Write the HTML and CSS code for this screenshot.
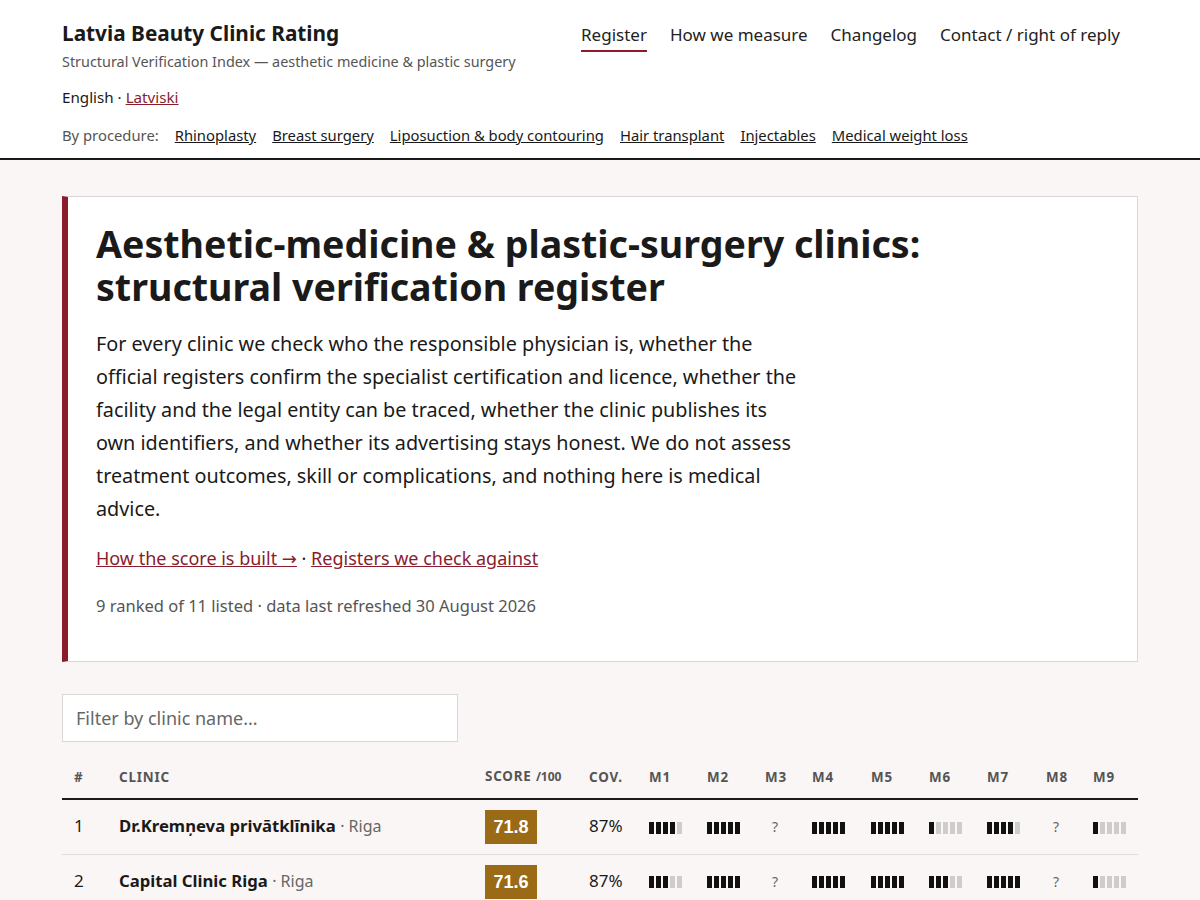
FILE: index.html
```html
<!DOCTYPE html>
<html lang="en">
  <head>
    <meta charset="utf-8">
    <title>Latvia Beauty Clinic Rating</title>
    <link rel="stylesheet" href="styles.css">
  </head>
  <body>
	<header class="site-header">
		<div class="wrap">
			<div class="top-row">
				<div class="brand">
					<div class="brand-title">Latvia Beauty Clinic Rating</div>
					<div class="brand-sub">Structural Verification Index — aesthetic medicine &amp; plastic surgery</div>
				</div>
				<nav class="main-nav">
					<a href="#" class="active">Register</a>
					<a href="#">How we measure</a>
					<a href="#">Changelog</a>
					<a href="#">Contact / right of reply</a>
				</nav>
			</div>
			<div class="lang">English · <a href="#">Latviski</a></div>
			<div class="procs">
				<span class="procs-label">By procedure:</span>
				<a href="#">Rhinoplasty</a>
				<a href="#">Breast surgery</a>
				<a href="#">Liposuction &amp; body contouring</a>
				<a href="#">Hair transplant</a>
				<a href="#">Injectables</a>
				<a href="#">Medical weight loss</a>
			</div>
		</div>
	</header>

	<main class="wrap">
		<section class="intro">
			<h1>Aesthetic-medicine &amp; plastic-surgery clinics: structural verification register</h1>
			<p class="lead">For every clinic we check who the responsible physician is, whether the official registers confirm the specialist certification and licence, whether the facility and the legal entity can be traced, whether the clinic publishes its own identifiers, and whether its advertising stays honest. We do not assess treatment outcomes, skill or complications, and nothing here is medical advice.</p>
			<p class="links"><a href="#">How the score is built <span class="arrow">→</span></a> · <a href="#">Registers we check against</a></p>
			<p class="meta">9 ranked of 11 listed · data last refreshed 30 August 2026</p>
		</section>

		<input type="text" class="filter" placeholder="Filter by clinic name...">

		<table class="register">
			<colgroup>
				<col class="c-rank"><col class="c-name"><col class="c-score"><col class="c-cov">
				<col class="c-m"><col class="c-m"><col class="c-q"><col class="c-m4"><col class="c-m">
				<col class="c-m"><col class="c-m4"><col class="c-q"><col class="c-last">
			</colgroup>
			<thead>
				<tr>
					<th>#</th><th>Clinic</th><th>Score <small>/100</small></th><th>Cov.</th>
					<th>M1</th><th>M2</th><th>M3</th><th>M4</th><th>M5</th><th>M6</th><th>M7</th><th>M8</th><th>M9</th>
				</tr>
			</thead>
			<tbody>
				<tr>
					<td>1</td>
					<td><b>Dr.Kremņeva privātklīnika</b> <span class="city">· Riga</span></td>
					<td><span class="score">71.8</span></td>
					<td>87%</td>
					<td><span class="bar"><i></i><i></i><i></i><i></i><i class="off"></i></span></td>
					<td><span class="bar"><i></i><i></i><i></i><i></i><i></i></span></td>
					<td><span class="unk">?</span></td>
					<td><span class="bar"><i></i><i></i><i></i><i></i><i></i></span></td>
					<td><span class="bar"><i></i><i></i><i></i><i></i><i></i></span></td>
					<td><span class="bar"><i></i><i class="off"></i><i class="off"></i><i class="off"></i><i class="off"></i></span></td>
					<td><span class="bar"><i></i><i></i><i></i><i></i><i class="off"></i></span></td>
					<td><span class="unk">?</span></td>
					<td><span class="bar"><i></i><i class="off"></i><i class="off"></i><i class="off"></i><i class="off"></i></span></td>
				</tr>
				<tr>
					<td>2</td>
					<td><b>Capital Clinic Riga</b> <span class="city">· Riga</span></td>
					<td><span class="score">71.6</span></td>
					<td>87%</td>
					<td><span class="bar"><i></i><i></i><i></i><i class="off"></i><i class="off"></i></span></td>
					<td><span class="bar"><i></i><i></i><i></i><i></i><i></i></span></td>
					<td><span class="unk">?</span></td>
					<td><span class="bar"><i></i><i></i><i></i><i></i><i></i></span></td>
					<td><span class="bar"><i></i><i></i><i></i><i></i><i></i></span></td>
					<td><span class="bar"><i></i><i></i><i></i><i class="off"></i><i class="off"></i></span></td>
					<td><span class="bar"><i></i><i></i><i></i><i></i><i></i></span></td>
					<td><span class="unk">?</span></td>
					<td><span class="bar"><i></i><i class="off"></i><i class="off"></i><i class="off"></i><i class="off"></i></span></td>
				</tr>
			</tbody>
		</table>
	</main>
  </body>
</html>
```

FILE: styles.css
```css
body{
	margin:0;
	background:#faf6f5;
	color:#1a1a1a;
	font-family:"Noto Sans","Open Sans",sans-serif;
}
a{
	color:#8a1c2b;
}
.wrap{
	width:1076px;
	margin-left:auto;
	margin-right:auto;
}

/* header */
.site-header{
	background:#fff;
	border-bottom:2px solid #1a1a1a;
	padding:20px 0 12px;
}
.top-row{
	display:flex;
	justify-content:space-between;
	align-items:flex-start;
}
.brand-title{
	font-size:20.8px;
	font-weight:700;
	line-height:26px;
}
.brand-sub{
	margin-top:6px;
	font-size:14.4px;
	line-height:20px;
	color:#555;
}
.main-nav{
	display:flex;
	gap:23px;
	margin-top:1px;
	margin-right:18px;
	font-size:17px;
	line-height:28px;
}
.main-nav a{
	color:#222;
	text-decoration:none;
}
.main-nav a.active{
	border-bottom:2px solid #8a1c2b;
	padding-bottom:1px;
}
.lang{
	margin-top:14px;
	font-size:15.2px;
	line-height:22px;
}
.procs{
	margin-top:16px;
	font-size:14.8px;
	line-height:22px;
	display:flex;
	gap:16px;
}
.procs-label{
	color:#555;
}
.procs a{
	color:#1a1a1a;
}

/* intro card */
main{
	padding-top:36px;
}
.intro{
	background:#fff;
	border:1px solid #ddd6d6;
	border-left:6px solid #8a1c2b;
	padding:25px 28px 43px;
}
.intro h1{
	margin:0;
	font-size:37.6px;
	line-height:43px;
	font-weight:700;
}
.lead{
	margin:19px 0 0;
	max-width:706px;
	font-size:19.8px;
	line-height:33px;
}
.links{
	margin:19px 0 0;
	font-size:18px;
	line-height:28px;
}
.arrow{
	font-family:"DejaVu Sans",sans-serif;
}
.meta{
	margin:21px 0 0;
	font-size:16.5px;
	line-height:24px;
	color:#555;
}

/* filter + table */
.filter{
	display:block;
	margin-top:32px;
	width:396px;
	height:48px;
	box-sizing:border-box;
	padding:0 13px;
	border:1px solid #ddd6d6;
	background:#fff;
	font-family:inherit;
	font-size:18px;
	color:#1a1a1a;
}
.filter::placeholder{
	color:#666;
}
.register{
	margin-top:19px;
	width:1076px;
	table-layout:fixed;
	border-collapse:collapse;
}
.c-rank{width:45px;}
.c-name{width:366px;}
.c-score{width:104px;}
.c-cov{width:60px;}
.c-m{width:58px;}
.c-m4{width:59px;}
.c-q{width:47px;}
.c-last{width:57px;}
.register th{
	text-align:left;
	padding:6px 12px 12px;
	font-size:13.4px;
	line-height:18px;
	font-weight:700;
	letter-spacing:0.06em;
	text-transform:uppercase;
	color:#555;
	border-bottom:2px solid #1a1a1a;
	white-space:nowrap;
}
.register th small{
	font-size:12px;
	letter-spacing:0;
}
.register td{
	height:55px;
	box-sizing:border-box;
	padding:0 12px 1px;
	font-size:17px;
	line-height:20px;
	border-bottom:1px solid #e2dcdc;
	white-space:nowrap;
	vertical-align:middle;
}
.register td b{
	font-size:16.7px;
	font-weight:700;
}
.city{
	color:#666;
	font-size:16px;
}
.score{
	display:inline-block;
	width:52px;
	height:34px;
	margin-top:2px;
	background:#9a6a16;
	color:#fff;
	font-family:"Liberation Sans","Noto Sans",sans-serif;
	font-weight:700;
	font-size:18px;
	line-height:34px;
	text-align:center;
	vertical-align:middle;
}
.bar{
	display:inline-flex;
	gap:2px;
	vertical-align:middle;
}
.bar i{
	display:block;
	width:5px;
	height:12px;
	background:#111;
}
.bar i.off{
	background:#cfcccc;
}
.unk{
	color:#666;
	font-size:14px;
	padding-left:7px;
}
```
